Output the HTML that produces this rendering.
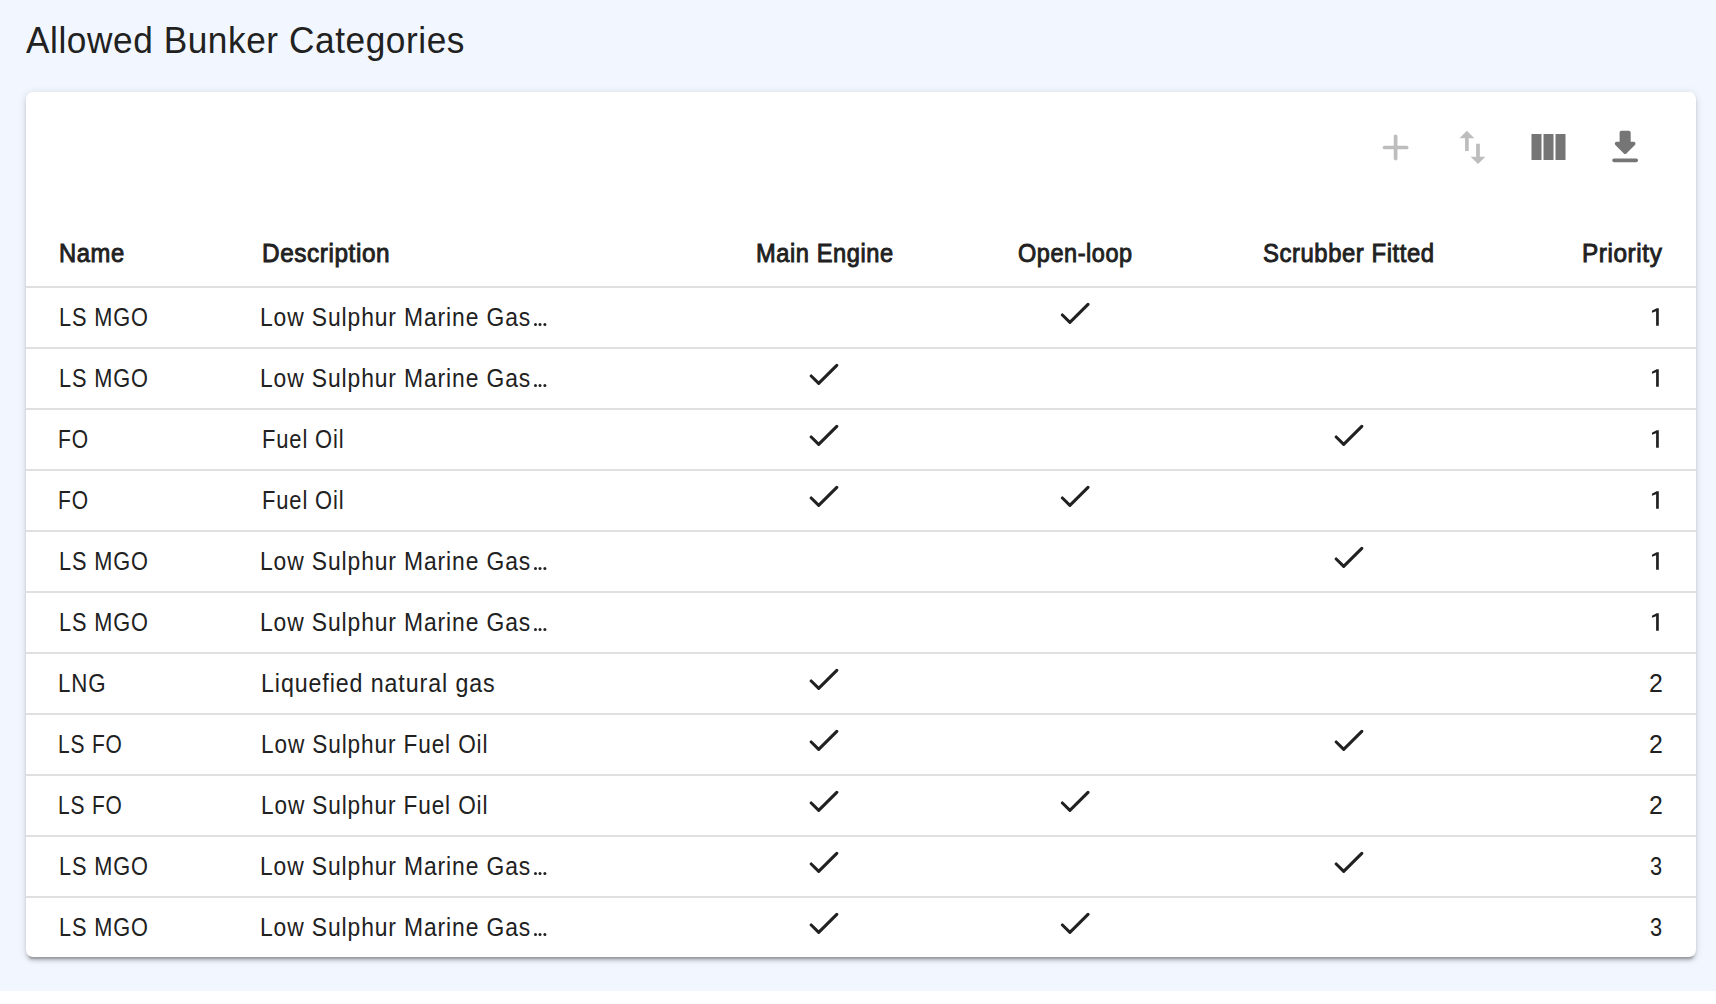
<!DOCTYPE html>
<html><head><meta charset="utf-8"><style>
html,body{margin:0;padding:0;}
body{width:1716px;height:1004px;background:#fff;position:relative;overflow:hidden;font-family:"Liberation Sans",sans-serif;}
.bg{position:absolute;left:0;top:0;width:1716px;height:991px;background:#f2f6fe;}
.card{position:absolute;left:26px;top:92px;width:1670px;height:865px;background:#fff;border-radius:7.2px;
box-shadow:0 5.4px 1.8px -3.6px rgba(0,0,0,.2),0 3.6px 3.6px 0 rgba(0,0,0,.14),0 1.8px 9px 0 rgba(0,0,0,.12);overflow:hidden}
.dv{position:absolute;left:26px;width:1670px;height:2px;background:#e0e0e0}
.t{position:absolute;white-space:nowrap;transform-origin:0 0;}
svg.ic{position:absolute;left:0;top:0}
</style></head><body>
<div class="bg"></div>
<div class="card"></div>
<div class="dv" style="top:286px"></div><div class="dv" style="top:347px"></div><div class="dv" style="top:408px"></div><div class="dv" style="top:469px"></div><div class="dv" style="top:530px"></div><div class="dv" style="top:591px"></div><div class="dv" style="top:652px"></div><div class="dv" style="top:713px"></div><div class="dv" style="top:774px"></div><div class="dv" style="top:835px"></div><div class="dv" style="top:896px"></div>
<div class="t" style="left:26.20px;top:21.93px;font-size:37.65px;line-height:37.65px;letter-spacing:0.60px;transform:scaleX(0.9359);color:#212121">Allowed Bunker Categories</div><div class="t" style="left:58.80px;top:240.79px;font-size:25.29px;line-height:25.29px;letter-spacing:0.60px;-webkit-text-stroke:0.9px #212121;transform:scaleX(0.9405);color:#212121">Name</div><div class="t" style="left:261.80px;top:240.79px;font-size:25.29px;line-height:25.29px;letter-spacing:0.60px;-webkit-text-stroke:0.9px #212121;transform:scaleX(0.9633);color:#212121">Description</div><div class="t" style="left:755.60px;top:240.79px;font-size:25.29px;line-height:25.29px;letter-spacing:0.60px;-webkit-text-stroke:0.9px #212121;transform:scaleX(0.9358);color:#212121">Main Engine</div><div class="t" style="left:1018.40px;top:240.79px;font-size:25.29px;line-height:25.29px;letter-spacing:0.60px;-webkit-text-stroke:0.9px #212121;transform:scaleX(0.9291);color:#212121">Open-loop</div><div class="t" style="left:1263.20px;top:240.79px;font-size:25.29px;line-height:25.29px;letter-spacing:0.60px;-webkit-text-stroke:0.9px #212121;transform:scaleX(0.9434);color:#212121">Scrubber Fitted</div><div class="t" style="left:1582.20px;top:240.79px;font-size:25.29px;line-height:25.29px;letter-spacing:0.60px;-webkit-text-stroke:0.9px #212121;transform:scaleX(0.9631);color:#212121">Priority</div><div class="t" style="left:58.60px;top:305.46px;font-size:25.44px;line-height:25.44px;letter-spacing:1.00px;transform:scaleX(0.8543);color:#212121">LS MGO</div><div class="t" style="left:260.20px;top:305.46px;font-size:25.44px;line-height:25.44px;letter-spacing:1.00px;transform:scaleX(0.8979);color:#212121">Low Sulphur Marine Gas</div><div class="t" style="left:58.60px;top:366.46px;font-size:25.44px;line-height:25.44px;letter-spacing:1.00px;transform:scaleX(0.8543);color:#212121">LS MGO</div><div class="t" style="left:260.20px;top:366.46px;font-size:25.44px;line-height:25.44px;letter-spacing:1.00px;transform:scaleX(0.8979);color:#212121">Low Sulphur Marine Gas</div><div class="t" style="left:58.20px;top:427.46px;font-size:25.44px;line-height:25.44px;letter-spacing:1.00px;transform:scaleX(0.8252);color:#212121">FO</div><div class="t" style="left:261.60px;top:427.46px;font-size:25.44px;line-height:25.44px;letter-spacing:1.00px;transform:scaleX(0.8623);color:#212121">Fuel Oil</div><div class="t" style="left:58.20px;top:488.46px;font-size:25.44px;line-height:25.44px;letter-spacing:1.00px;transform:scaleX(0.8252);color:#212121">FO</div><div class="t" style="left:261.60px;top:488.46px;font-size:25.44px;line-height:25.44px;letter-spacing:1.00px;transform:scaleX(0.8623);color:#212121">Fuel Oil</div><div class="t" style="left:58.60px;top:549.46px;font-size:25.44px;line-height:25.44px;letter-spacing:1.00px;transform:scaleX(0.8543);color:#212121">LS MGO</div><div class="t" style="left:260.20px;top:549.46px;font-size:25.44px;line-height:25.44px;letter-spacing:1.00px;transform:scaleX(0.8979);color:#212121">Low Sulphur Marine Gas</div><div class="t" style="left:58.60px;top:610.46px;font-size:25.44px;line-height:25.44px;letter-spacing:1.00px;transform:scaleX(0.8543);color:#212121">LS MGO</div><div class="t" style="left:260.20px;top:610.46px;font-size:25.44px;line-height:25.44px;letter-spacing:1.00px;transform:scaleX(0.8979);color:#212121">Low Sulphur Marine Gas</div><div class="t" style="left:58.20px;top:671.46px;font-size:25.44px;line-height:25.44px;letter-spacing:1.00px;transform:scaleX(0.8771);color:#212121">LNG</div><div class="t" style="left:260.80px;top:671.46px;font-size:25.44px;line-height:25.44px;letter-spacing:1.00px;transform:scaleX(0.9119);color:#212121">Liquefied natural gas</div><div class="t" style="left:1649.40px;top:671.46px;font-size:25.44px;line-height:25.44px;letter-spacing:1.00px;transform:scaleX(0.9775);color:#212121">2</div><div class="t" style="left:58.20px;top:732.46px;font-size:25.44px;line-height:25.44px;letter-spacing:1.00px;transform:scaleX(0.8231);color:#212121">LS FO</div><div class="t" style="left:260.80px;top:732.46px;font-size:25.44px;line-height:25.44px;letter-spacing:1.00px;transform:scaleX(0.8880);color:#212121">Low Sulphur Fuel Oil</div><div class="t" style="left:1649.40px;top:732.46px;font-size:25.44px;line-height:25.44px;letter-spacing:1.00px;transform:scaleX(0.9775);color:#212121">2</div><div class="t" style="left:58.20px;top:793.46px;font-size:25.44px;line-height:25.44px;letter-spacing:1.00px;transform:scaleX(0.8231);color:#212121">LS FO</div><div class="t" style="left:260.80px;top:793.46px;font-size:25.44px;line-height:25.44px;letter-spacing:1.00px;transform:scaleX(0.8880);color:#212121">Low Sulphur Fuel Oil</div><div class="t" style="left:1649.40px;top:793.46px;font-size:25.44px;line-height:25.44px;letter-spacing:1.00px;transform:scaleX(0.9775);color:#212121">2</div><div class="t" style="left:58.60px;top:854.46px;font-size:25.44px;line-height:25.44px;letter-spacing:1.00px;transform:scaleX(0.8543);color:#212121">LS MGO</div><div class="t" style="left:260.20px;top:854.46px;font-size:25.44px;line-height:25.44px;letter-spacing:1.00px;transform:scaleX(0.8979);color:#212121">Low Sulphur Marine Gas</div><div class="t" style="left:1650.10px;top:854.46px;font-size:25.44px;line-height:25.44px;letter-spacing:1.00px;transform:scaleX(0.8571);color:#212121">3</div><div class="t" style="left:58.60px;top:915.46px;font-size:25.44px;line-height:25.44px;letter-spacing:1.00px;transform:scaleX(0.8543);color:#212121">LS MGO</div><div class="t" style="left:260.20px;top:915.46px;font-size:25.44px;line-height:25.44px;letter-spacing:1.00px;transform:scaleX(0.8979);color:#212121">Low Sulphur Marine Gas</div><div class="t" style="left:1650.10px;top:915.46px;font-size:25.44px;line-height:25.44px;letter-spacing:1.00px;transform:scaleX(0.8571);color:#212121">3</div>
<svg class="ic" width="1716" height="1004" viewBox="0 0 1716 1004">
<g transform="translate(1373.4,125.3) scale(1.85)" fill="#bdbdbd"><path d="M18 13h-5v5c0 .55-.45 1-1 1s-1-.45-1-1v-5H6c-.55 0-1-.45-1-1s.45-1 1-1h5V6c0-.55.45-1 1-1s1 .45 1 1v5h5c.55 0 1 .45 1 1s-.45 1-1 1z"/></g>
<g transform="translate(1450.25,125.2) scale(1.85)" fill="#bdbdbd"><path d="M16 17.01V10h-2v7.01h-3L15 21l4-3.99h-3zM9 3L5 6.99h3V14h2V6.99h3L9 3z"/></g>
<g transform="translate(1523.5,124) scale(2)" fill="#757575"><path d="M10 18h5V5h-5v13zm-6 0h5V5H4v13zM16 5v13h5V5h-5z"/></g>
<g transform="translate(1602.95,125.2) scale(1.85)" fill="#757575"><path d="M16.59 9H15V4c0-.55-.45-1-1-1h-4c-.55 0-1 .45-1 1v5H7.41c-.89 0-1.34 1.08-.71 1.71l4.59 4.59c.39.39 1.02.39 1.41 0l4.59-4.59c.63-.63.19-1.71-.7-1.71zM5 19c0 .55.45 1 1 1h12c.55 0 1-.45 1-1s-.45-1-1-1H6c-.55 0-1 .45-1 1z"/></g>
<path d="M1658.8 308.2V325.7H1656.1V311.2L1651.95 312.8V310.8L1656.6 308.2Z M1658.8 369.2V386.7H1656.1V372.2L1651.95 373.8V371.8L1656.6 369.2Z M1658.8 430.2V447.7H1656.1V433.2L1651.95 434.8V432.8L1656.6 430.2Z M1658.8 491.2V508.7H1656.1V494.2L1651.95 495.8V493.8L1656.6 491.2Z M1658.8 552.2V569.7H1656.1V555.2L1651.95 556.8V554.8L1656.6 552.2Z M1658.8 613.2V630.7H1656.1V616.2L1651.95 617.8V615.8L1656.6 613.2Z" fill="#212121"/>
<g fill="#212121"><circle cx="535.50" cy="324.50" r="1.5"/><circle cx="540.00" cy="324.50" r="1.5"/><circle cx="544.90" cy="324.50" r="1.5"/><circle cx="535.50" cy="385.50" r="1.5"/><circle cx="540.00" cy="385.50" r="1.5"/><circle cx="544.90" cy="385.50" r="1.5"/><circle cx="535.50" cy="568.50" r="1.5"/><circle cx="540.00" cy="568.50" r="1.5"/><circle cx="544.90" cy="568.50" r="1.5"/><circle cx="535.50" cy="629.50" r="1.5"/><circle cx="540.00" cy="629.50" r="1.5"/><circle cx="544.90" cy="629.50" r="1.5"/><circle cx="535.50" cy="873.50" r="1.5"/><circle cx="540.00" cy="873.50" r="1.5"/><circle cx="544.90" cy="873.50" r="1.5"/><circle cx="535.50" cy="934.50" r="1.5"/><circle cx="540.00" cy="934.50" r="1.5"/><circle cx="544.90" cy="934.50" r="1.5"/></g>
<path d="M1062.40 315.00L1069.90 322.30L1088.00 304.30 M811.20 376.00L818.70 383.30L836.80 365.30 M811.20 437.00L818.70 444.30L836.80 426.30 M1336.20 437.00L1343.70 444.30L1361.80 426.30 M811.20 498.00L818.70 505.30L836.80 487.30 M1062.40 498.00L1069.90 505.30L1088.00 487.30 M1336.20 559.00L1343.70 566.30L1361.80 548.30 M811.20 681.00L818.70 688.30L836.80 670.30 M811.20 742.00L818.70 749.30L836.80 731.30 M1336.20 742.00L1343.70 749.30L1361.80 731.30 M811.20 803.00L818.70 810.30L836.80 792.30 M1062.40 803.00L1069.90 810.30L1088.00 792.30 M811.20 864.00L818.70 871.30L836.80 853.30 M1336.20 864.00L1343.70 871.30L1361.80 853.30 M811.20 925.00L818.70 932.30L836.80 914.30 M1062.40 925.00L1069.90 932.30L1088.00 914.30" fill="none" stroke="#212121" stroke-width="3.1" stroke-linecap="round" stroke-linejoin="round"/>
</svg>
</body></html>
